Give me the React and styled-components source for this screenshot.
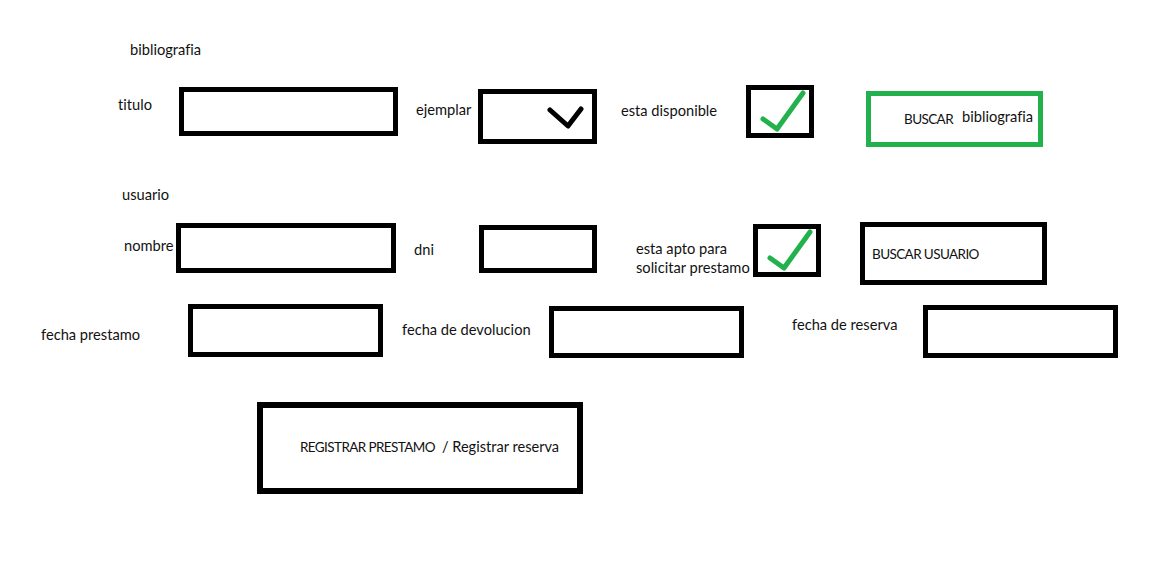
import React from "react";
import styled, { createGlobalStyle } from "styled-components";

const Global = createGlobalStyle`
  html, body { margin: 0; padding: 0; background: #fff; }
  body {
    font-family: Lato, "Open Sans", "Liberation Sans", sans-serif;
    font-size: 14.67px;
    font-variant-ligatures: none;
    color: #111;
  }
`;

const Page = styled.div`
  width: 1151px;
  height: 564px;
  display: flex;
  flex-direction: column;
  overflow: hidden;
`;

const SectionTitle = styled.div`
  margin: ${(p) => p.$mt}px 0 0 ${(p) => p.$ml}px;
  line-height: 18px;
`;

const Row = styled.div`
  display: flex;
  align-items: flex-start;
  margin-top: ${(p) => p.$mt}px;
`;

const Label = styled.div`
  flex: none;
  width: ${(p) => p.$w}px;
  margin: ${(p) => p.$mt || 0}px 0 0 ${(p) => p.$ml || 0}px;
  line-height: ${(p) => p.$lh || 18}px;
  white-space: nowrap;
`;

const Box = styled.div`
  flex: none;
  box-sizing: border-box;
  width: ${(p) => p.$w}px;
  height: ${(p) => p.$h}px;
  margin: ${(p) => p.$mt || 0}px 0 0 ${(p) => p.$ml || 0}px;
  border: 5px solid #000;
  background: #fff;
`;

const SelectBox = styled(Box)`
  display: flex;
  align-items: center;
  justify-content: flex-end;
  padding-right: 8px;
`;

const CheckBox = styled(Box)`
  display: flex;
`;

const CheckSvg = styled.svg`
  width: 100%;
  height: 100%;
  overflow: visible;
`;

const SearchButton = styled(Box)`
  display: flex;
  align-items: center;
  padding-left: ${(p) => p.$pl}px;
  border-color: ${(p) => p.$color};
  gap: 9px;
  white-space: nowrap;
`;

const Caps = styled.span`
  font-size: 13.5px;
  letter-spacing: -0.6px;
`;

const Raised = styled.span`
  margin-bottom: 6px;
`;

const RegisterButton = styled(Box)`
  border-width: 6px;
  display: flex;
  align-items: center;
  padding: 0 0 3px 37px;
  gap: 7px;
  white-space: nowrap;
`;

const Larger = styled.span`
  font-size: 14.6px;
`;

const CheckMark = () => (
  <CheckSvg viewBox="0 0 58 43">
    <polyline
      points="12,29 26,39 52,3"
      fill="none"
      stroke="#22b14c"
      strokeWidth="5"
      strokeLinecap="round"
      strokeLinejoin="round"
    />
  </CheckSvg>
);

const Chevron = () => (
  <svg width="38" height="24" viewBox="0 0 38 24">
    <polyline
      points="4,5 22,21 35,4"
      fill="none"
      stroke="#000"
      strokeWidth="5"
      strokeLinecap="round"
      strokeLinejoin="round"
    />
  </svg>
);

export default function App() {
  return (
    <>
      <Global />
      <Page>
        <SectionTitle $mt={41} $ml={130}>bibliografia</SectionTitle>
        <Row $mt={26}>
          <Label $ml={118} $w={61} $mt={11}>titulo</Label>
          <Box $w={219} $h={49} $mt={2} />
          <Label $ml={18} $w={62} $mt={16}>ejemplar</Label>
          <SelectBox $w={119} $h={55} $mt={4}>
            <Chevron />
          </SelectBox>
          <Label $ml={24} $w={125} $mt={17}>esta disponible</Label>
          <CheckBox $w={68} $h={53}>
            <CheckMark />
          </CheckBox>
          <SearchButton $ml={52} $w={177} $h={56} $mt={6} $pl={33} $color="#22b14c">
            <Caps>BUSCAR</Caps>
            <Raised>bibliografia</Raised>
          </SearchButton>
        </Row>

        <SectionTitle $mt={39} $ml={122}>usuario</SectionTitle>
        <Row $mt={18}>
          <Label $ml={124} $w={52} $mt={15}>nombre</Label>
          <Box $w={220} $h={50} $mt={1} />
          <Label $ml={18} $w={65} $mt={19}>dni</Label>
          <Box $w={118} $h={48} $mt={3} />
          <Label $ml={39} $w={117} $mt={17} $lh={19}>
            esta apto para
            <br />
            solicitar prestamo
          </Label>
          <CheckBox $w={68} $h={53} $mt={2}>
            <CheckMark />
          </CheckBox>
          <SearchButton $ml={39} $w={187} $h={63} $pl={7} $color="#000">
            <Caps>BUSCAR USUARIO</Caps>
          </SearchButton>
        </Row>

        <Row $mt={19}>
          <Label $ml={41} $w={147} $mt={22}>fecha prestamo</Label>
          <Box $w={195} $h={53} />
          <Label $ml={19} $w={147} $mt={17}>fecha de devolucion</Label>
          <Box $w={195} $h={52} $mt={2} />
          <Label $ml={48} $w={131} $mt={12}>fecha de reserva</Label>
          <Box $w={195} $h={53} $mt={1} />
        </Row>

        <Row $mt={44}>
          <RegisterButton $ml={257} $w={326} $h={92}>
            <Caps>REGISTRAR PRESTAMO</Caps>
            <Larger>/ Registrar reserva</Larger>
          </RegisterButton>
        </Row>
      </Page>
    </>
  );
}
